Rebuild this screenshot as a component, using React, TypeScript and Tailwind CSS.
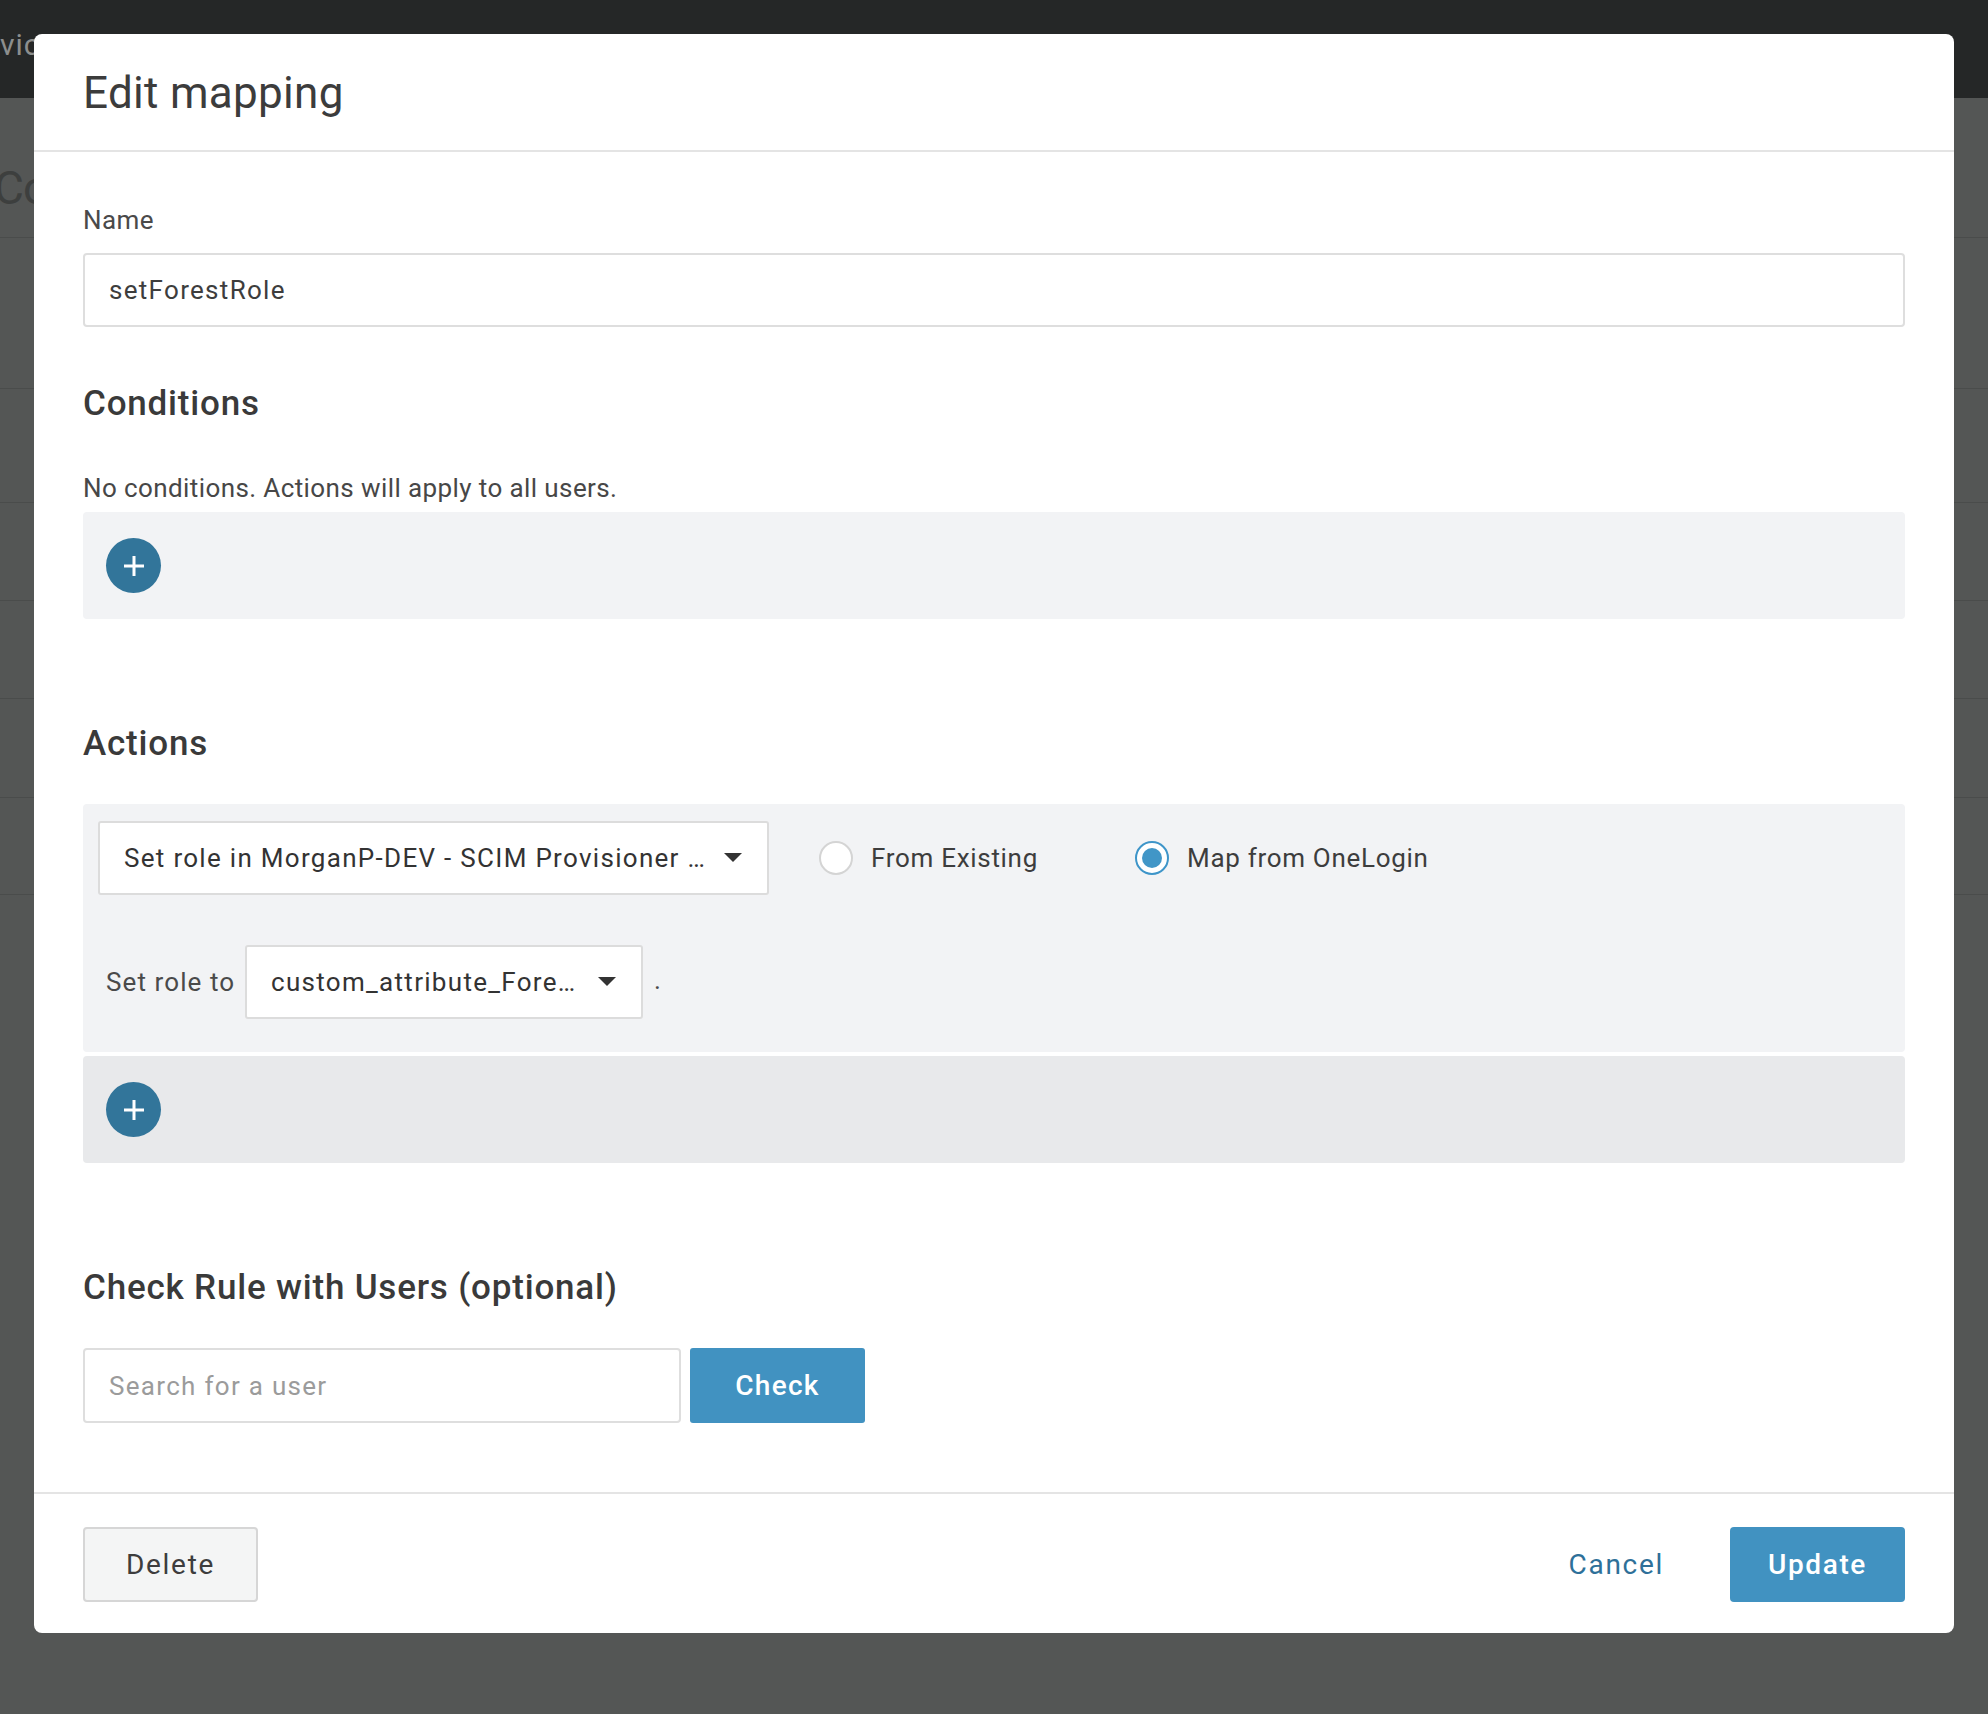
import React from 'react';

function PlusButton() {
  return (
    <button className="w-[55px] h-[55px] rounded-full bg-[#32759a] flex items-center justify-center">
      <svg width="22" height="22" viewBox="0 0 22 22">
        <rect x="9.5" y="1" width="3" height="20" fill="#ffffff" />
        <rect x="1" y="9.5" width="20" height="3" fill="#ffffff" />
      </svg>
    </button>
  );
}

function Caret() {
  return (
    <svg width="18" height="10" viewBox="0 0 18 10" className="shrink-0">
      <polygon points="0,0 18,0 9,9" fill="#333333" />
    </svg>
  );
}

function Radio({ checked, label, className }: { checked?: boolean; label: string; className?: string }) {
  return (
    <label className={`flex items-center ${className ?? ''}`}>
      {checked ? (
        <span className="w-[34px] h-[34px] rounded-full border-2 border-[#3e95c9] bg-white flex items-center justify-center">
          <span className="w-[20px] h-[20px] rounded-full bg-[#4196c7]" />
        </span>
      ) : (
        <span className="w-[34px] h-[34px] rounded-full border-2 border-[#d4d4d4] bg-white" />
      )}
      <span className="ml-[18px] text-[26px] leading-[30px] text-[#3d3d3d] tracking-[0.7px]">{label}</span>
    </label>
  );
}

function Background() {
  return (
    <div className="w-full h-full flex flex-col bg-[#545655]">
      <div className="h-[98px] bg-[#252727] flex items-start pt-[28px]">
        <span className="text-[30px] leading-[34px] text-[#8c8e8d] tracking-[1px]">vic</span>
      </div>
      <div className="h-[140px] border-b border-[#4a4c4b] pt-[62px] pl-[0px]">
        <span className="block -ml-[6px] text-[46px] leading-[56px] text-[#3d3f3e] tracking-[-1px]">Co</span>
      </div>
      <div className="h-[151px] border-b border-[#4a4c4b]" />
      <div className="h-[114px] border-b border-[#4a4c4b]" />
      <div className="h-[98px] border-b border-[#4a4c4b]" />
      <div className="h-[98px] border-b border-[#4a4c4b]" />
      <div className="h-[99px] border-b border-[#4a4c4b]" />
      <div className="h-[97px] border-b border-[#4a4c4b]" />
    </div>
  );
}

export default function App() {
  return (
    <div className="relative w-[1988px] h-[1714px] overflow-hidden font-['Roboto',sans-serif]">
      <Background />

      <div className="absolute left-[34px] top-[34px] w-[1920px] h-[1599px] bg-white rounded-[8px] flex flex-col">
        {/* header */}
        <div className="h-[118px] border-b-2 border-[#e4e4e4] px-[49px] flex items-center">
          <h1 className="text-[44px] leading-[52px] text-[#3c3c3c] font-normal tracking-[0.3px] pt-[2px]">Edit mapping</h1>
        </div>

        {/* body */}
        <div className="flex-1 px-[49px] pt-[53px] flex flex-col">
          <label className="text-[26px] leading-[30px] text-[#4a4a4a] tracking-[0.4px]">Name</label>
          <div className="mt-[18px] h-[74px] border-2 border-[#dedede] rounded-[4px] flex items-center pl-[24px]">
            <span className="text-[26px] leading-[30px] text-[#3d3d3d] tracking-[1.3px]">setForestRole</span>
          </div>

          <h2 className="mt-[56px] text-[35px] leading-[42px] font-medium text-[#3a3a3a] tracking-[0.8px]">Conditions</h2>
          <p className="mt-[48px] text-[26px] leading-[30px] text-[#474747] tracking-[0.4px]">No conditions. Actions will apply to all users.</p>
          <div className="mt-[9px] h-[107px] bg-[#f2f3f5] rounded-[4px] flex items-center pl-[23px]">
            <PlusButton />
          </div>

          <h2 className="mt-[104px] text-[35px] leading-[42px] font-medium text-[#3a3a3a] tracking-[0.8px]">Actions</h2>
          <div className="mt-[39px] h-[248px] bg-[#f2f3f5] rounded-[4px] pt-[17px] px-[15px] flex flex-col">
            <div className="flex items-center h-[74px]">
              <div className="w-[671px] h-[74px] bg-white border-2 border-[#dcdcdc] rounded-[3px] flex items-center pl-[24px] pr-[25px]">
                <span className="flex-1 text-[26px] leading-[30px] text-[#333333] tracking-[1.3px] whitespace-nowrap overflow-hidden">
                  Set role in MorganP-DEV - SCIM Provisioner …
                </span>
                <Caret />
              </div>
              <Radio label="From Existing" className="ml-[50px] w-[316px]" />
              <Radio checked label="Map from OneLogin" />
            </div>
            <div className="flex items-center h-[74px] mt-[50px] pl-[8px]">
              <span className="w-[139px] text-[26px] leading-[30px] text-[#4a4a4a] tracking-[1.1px] whitespace-nowrap">Set role to</span>
              <div className="w-[398px] h-[74px] bg-white border-2 border-[#dcdcdc] rounded-[3px] flex items-center pl-[24px] pr-[25px]">
                <span className="flex-1 text-[26px] leading-[30px] text-[#333333] tracking-[1.3px] whitespace-nowrap overflow-hidden">
                  custom_attribute_Fore…
                </span>
                <Caret />
              </div>
              <span className="ml-[11px] text-[26px] leading-[30px] text-[#4a4a4a] pb-[4px]">.</span>
            </div>
          </div>
          <div className="mt-[4px] h-[107px] bg-[#e8e9eb] rounded-[4px] flex items-center pl-[23px]">
            <PlusButton />
          </div>

          <h2 className="mt-[104px] text-[35px] leading-[42px] font-medium text-[#3a3a3a] tracking-[0.8px]">Check Rule with Users (optional)</h2>
          <div className="mt-[39px] flex items-center gap-[9px]">
            <div className="w-[598px] h-[75px] border-2 border-[#dedede] rounded-[4px] flex items-center pl-[24px]">
              <span className="text-[26px] leading-[30px] text-[#9b9b9b] tracking-[1.3px]">Search for a user</span>
            </div>
            <button className="w-[175px] h-[75px] bg-[#4192c1] rounded-[3px] text-white text-[28px] leading-[32px] font-medium tracking-[1.3px]">
              Check
            </button>
          </div>
        </div>

        {/* footer */}
        <div className="border-t-2 border-[#e4e4e4] px-[49px] pt-[33px] pb-[31px] flex items-center justify-between">
          <button className="w-[175px] h-[75px] bg-[#f4f5f5] border-2 border-[#d6d6d6] rounded-[4px] text-[28px] leading-[32px] text-[#3d3d3d] tracking-[1.7px]">
            Delete
          </button>
          <div className="flex items-center">
            <button className="text-[28px] leading-[32px] text-[#2e7099] tracking-[1.7px]">Cancel</button>
            <button className="ml-[66px] w-[175px] h-[75px] bg-[#4192c1] rounded-[4px] text-white text-[28px] leading-[32px] font-medium tracking-[1.6px]">
              Update
            </button>
          </div>
        </div>
      </div>
    </div>
  );
}
